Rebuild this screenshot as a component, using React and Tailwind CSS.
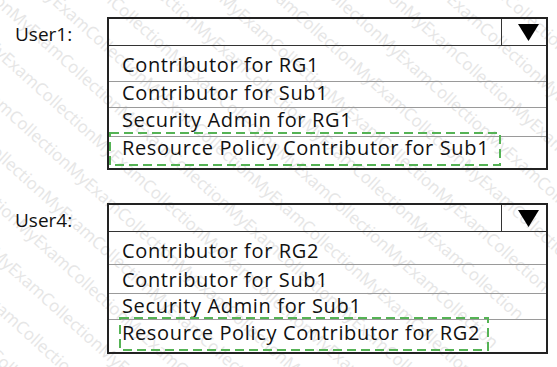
import React from "react";

const font = { fontFamily: '"Open Sans", "Noto Sans", sans-serif' };

function Watermark() {
  const lines = [];
  for (let i = 0; i < 24; i++) {
    lines.push(
      <div key={i} className="whitespace-nowrap h-[38px] leading-[38px] text-[17px] text-[#e6e6e6]">
        {"MyExamCollectionMyExamCollectionMyExamCollectionMyExamCollectionMyExamCollectionMyExamCollection"}
      </div>
    );
  }
  return (
    <div className="absolute inset-0 overflow-hidden pointer-events-none">
      <div className="absolute left-[-320px] top-[-280px] w-[1200px] rotate-[42deg] origin-center">
        {lines}
      </div>
    </div>
  );
}

function Dashed({ w, h }) {
  return (
    <svg width={w} height={h} className="absolute left-0 top-0">
      <rect x="1" y="1" width={w - 2} height={h - 2} fill="none" stroke="#55b355" strokeWidth="2" strokeDasharray="9 5" />
    </svg>
  );
}

function Row({ text, h, pt, last }) {
  return (
    <div
      className={`pl-[13px] text-[20px] leading-[20px] tracking-[0.65px] text-[#111] whitespace-nowrap ${last ? "" : "border-b border-[#9a9a9a]"}`}
      style={{ height: h, paddingTop: pt }}
    >
      {text}
    </div>
  );
}

function Block({ label, rows, heights, pts, dash }) {
  return (
    <div className="flex">
      <div className="w-[107px] pl-[15px] pt-[5px] text-[19px] leading-[24px] text-[#111]">{label}</div>
      <div className="relative w-[441px] border-2 border-[#222]">
        <div className="flex h-[27px] border-b border-[#333]">
          <div className="flex-1" />
          <div className="w-[45px] border-l border-[#333] flex items-center justify-end pr-[7px]">
            <svg width="21" height="17" viewBox="0 0 21 17"><polygon points="0,0 21,0 10.5,17" fill="#000" /></svg>
          </div>
        </div>
        {rows.map((r, i) => (
          <Row key={i} text={r} h={heights[i]} pt={pts[i]} last={i === rows.length - 1} />
        ))}
        <div className="absolute" style={{ left: dash.x, top: dash.y }}>
          <Dashed w={dash.w} h={dash.h} />
        </div>
      </div>
    </div>
  );
}

export default function App() {
  return (
    <div className="relative w-[557px] h-[367px] bg-white overflow-hidden" style={font}>
      <Watermark />
      <div className="relative flex flex-col pt-[17px] gap-[33px]">
        <Block
          label="User1:"
          rows={["Contributor for RG1", "Contributor for Sub1", "Security Admin for RG1", "Resource Policy Contributor for Sub1"]}
          heights={[36, 26, 29, 31]}
          pts={[9, 1, 2, 1]}
          dash={{ x: 0, y: 113, w: 392, h: 34 }}
        />
        <Block
          label="User4:"
          rows={["Contributor for RG2", "Contributor for Sub1", "Security Admin for Sub1", "Resource Policy Contributor for RG2"]}
          heights={[33, 29, 26, 32]}
          pts={[9, 5, 2, 3]}
          dash={{ x: 10, y: 112, w: 370, h: 34 }}
        />
      </div>
    </div>
  );
}
